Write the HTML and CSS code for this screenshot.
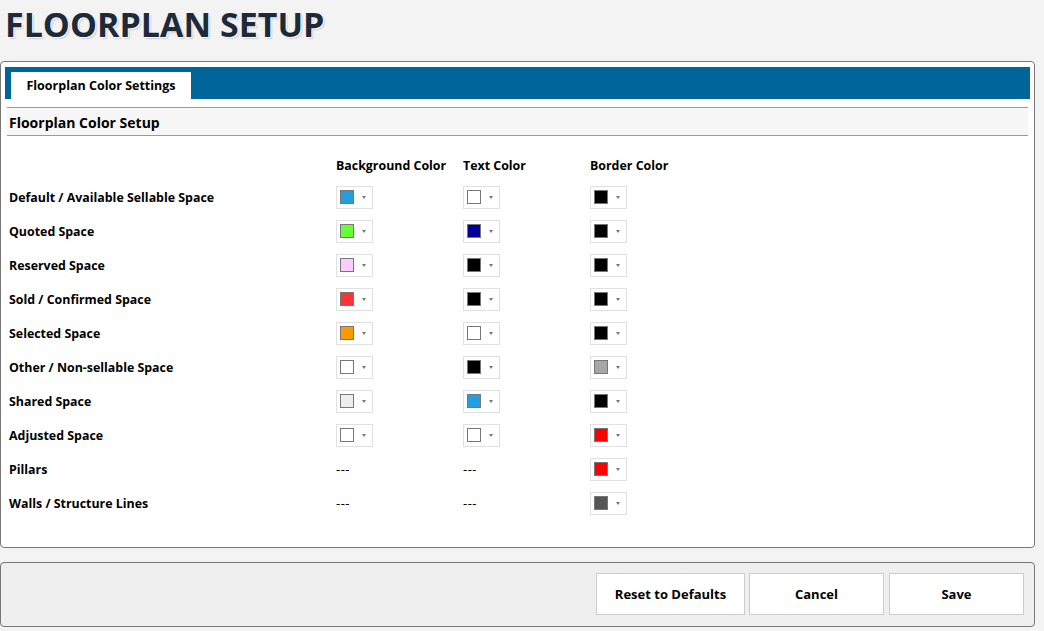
FILE: index.html
```html
<!DOCTYPE html>
<html>
<head>
<meta charset="utf-8">
<link rel="stylesheet" href="styles.css">
</head>
<body>
<h1 class="page-title">FLOORPLAN SETUP</h1>
<div class="panel">
  <div class="tabbar">
    <div class="tab">Floorplan Color Settings</div>
  </div>
  <div class="section-head">Floorplan Color Setup</div>
  <div class="grid">
    <div class="cell"></div>
    <div class="cell colhead">Background Color</div>
    <div class="cell colhead">Text Color</div>
    <div class="cell colhead">Border Color</div>

    <div class="cell label">Default / Available Sellable Space</div>
    <div class="cell"><span class="picker"><span class="sw" style="background:#229fdc"></span><span class="arrow"></span></span></div>
    <div class="cell"><span class="picker"><span class="sw" style="background:#ffffff"></span><span class="arrow"></span></span></div>
    <div class="cell"><span class="picker"><span class="sw" style="background:#000000"></span><span class="arrow"></span></span></div>

    <div class="cell label">Quoted Space</div>
    <div class="cell"><span class="picker"><span class="sw" style="background:#66ff33"></span><span class="arrow"></span></span></div>
    <div class="cell"><span class="picker"><span class="sw" style="background:#000099"></span><span class="arrow"></span></span></div>
    <div class="cell"><span class="picker"><span class="sw" style="background:#000000"></span><span class="arrow"></span></span></div>

    <div class="cell label">Reserved Space</div>
    <div class="cell"><span class="picker"><span class="sw" style="background:#ffccff"></span><span class="arrow"></span></span></div>
    <div class="cell"><span class="picker"><span class="sw" style="background:#000000"></span><span class="arrow"></span></span></div>
    <div class="cell"><span class="picker"><span class="sw" style="background:#000000"></span><span class="arrow"></span></span></div>

    <div class="cell label">Sold / Confirmed Space</div>
    <div class="cell"><span class="picker"><span class="sw" style="background:#ff3333"></span><span class="arrow"></span></span></div>
    <div class="cell"><span class="picker"><span class="sw" style="background:#000000"></span><span class="arrow"></span></span></div>
    <div class="cell"><span class="picker"><span class="sw" style="background:#000000"></span><span class="arrow"></span></span></div>

    <div class="cell label">Selected Space</div>
    <div class="cell"><span class="picker"><span class="sw" style="background:#ff9900"></span><span class="arrow"></span></span></div>
    <div class="cell"><span class="picker"><span class="sw" style="background:#ffffff"></span><span class="arrow"></span></span></div>
    <div class="cell"><span class="picker"><span class="sw" style="background:#000000"></span><span class="arrow"></span></span></div>

    <div class="cell label">Other / Non-sellable Space</div>
    <div class="cell"><span class="picker"><span class="sw" style="background:#ffffff"></span><span class="arrow"></span></span></div>
    <div class="cell"><span class="picker"><span class="sw" style="background:#000000"></span><span class="arrow"></span></span></div>
    <div class="cell"><span class="picker"><span class="sw" style="background:#a6a6a6"></span><span class="arrow"></span></span></div>

    <div class="cell label">Shared Space</div>
    <div class="cell"><span class="picker"><span class="sw" style="background:#eeeeee"></span><span class="arrow"></span></span></div>
    <div class="cell"><span class="picker"><span class="sw" style="background:#229fdc"></span><span class="arrow"></span></span></div>
    <div class="cell"><span class="picker"><span class="sw" style="background:#000000"></span><span class="arrow"></span></span></div>

    <div class="cell label">Adjusted Space</div>
    <div class="cell"><span class="picker"><span class="sw" style="background:#ffffff"></span><span class="arrow"></span></span></div>
    <div class="cell"><span class="picker"><span class="sw" style="background:#ffffff"></span><span class="arrow"></span></span></div>
    <div class="cell"><span class="picker"><span class="sw" style="background:#ff0000"></span><span class="arrow"></span></span></div>

    <div class="cell label">Pillars</div>
    <div class="cell dash">---</div>
    <div class="cell dash">---</div>
    <div class="cell"><span class="picker"><span class="sw" style="background:#ff0000"></span><span class="arrow"></span></span></div>

    <div class="cell label">Walls / Structure Lines</div>
    <div class="cell dash">---</div>
    <div class="cell dash">---</div>
    <div class="cell"><span class="picker"><span class="sw" style="background:#555555"></span><span class="arrow"></span></span></div>
  </div>
</div>
<div class="footer">
  <button class="btn btn-reset">Reset to Defaults</button>
  <button class="btn btn-cancel">Cancel</button>
  <button class="btn btn-save">Save</button>
</div>
</body>
</html>
```

FILE: styles.css
```css
html, body {
  margin: 0;
  padding: 0;
}
body {
  background: #f3f3f3;
  font-family: "Open Sans", "Noto Sans", sans-serif;
  color: #000;
  width: 1044px;
  height: 631px;
  overflow: hidden;
}
.page-title {
  margin: 0;
  padding: 3px 0 0 5px;
  height: 58px;
  box-sizing: border-box;
  font-size: 34px;
  line-height: 42px;
  font-weight: 700;
  color: #1c2b3c;
  text-shadow: 1px 1px 0 #fff, 2px 2px 1px rgba(0,0,0,0.15);
  letter-spacing: 0;
}
.panel {
  margin-top: 3px;
  width: 1035px;
  height: 487px;
  box-sizing: border-box;
  border: 1px solid #777;
  border-radius: 4px;
  background: #fff;
  padding: 5px 4px;
}
.tabbar {
  background: #006699;
  height: 32px;
  box-sizing: border-box;
  padding: 5px 0 0 6px;
  display: flex;
}
.tab {
  background: #fff;
  width: 180px;
  height: 27px;
  display: flex;
  align-items: center;
  justify-content: center;
  font-size: 12.5px;
  font-weight: 700;
}
.section-head {
  margin: 8px 2px 0 2px;
  height: 29px;
  box-sizing: border-box;
  border-top: 1px solid #999;
  border-bottom: 1px solid #999;
  background: #f7f7f7;
  padding: 1px 0 0 2px;
  font-size: 14px;
  font-weight: 700;
  line-height: 27px;
}
.grid {
  display: grid;
  grid-template-columns: 327px 127px 127px 1fr;
  grid-template-rows: 30px;
  grid-auto-rows: 34px;
  margin-top: 14px;
  padding-left: 4px;
}
.cell {
  display: flex;
  align-items: center;
  font-size: 12.4px;
  font-weight: 700;
}
.dash {
  font-weight: 400;
  font-size: 13px;
  letter-spacing: 0.5px;
}
.picker {
  display: inline-flex;
  align-items: center;
  width: 37px;
  height: 23px;
  box-sizing: border-box;
  border: 1px solid #e0e0e0;
  padding-left: 3px;
  background: #fff;
}
.sw {
  width: 14px;
  height: 14px;
  box-sizing: border-box;
  border: 1px solid #777;
}
.arrow {
  margin-left: 8px;
  width: 0;
  height: 0;
  border-left: 2.5px solid transparent;
  border-right: 2.5px solid transparent;
  border-top: 3px solid #777;
}
.footer {
  margin-top: 14px;
  width: 1035px;
  height: 65px;
  box-sizing: border-box;
  border: 1px solid #777;
  border-radius: 4px;
  background: #efefef;
  display: flex;
  justify-content: flex-end;
  gap: 4px;
  padding: 10px 10px 0 0;
}
.btn {
  height: 42px;
  box-sizing: border-box;
  border: 1px solid #ccc;
  background: #fff;
  font-family: "Open Sans", "Noto Sans", sans-serif;
  font-size: 13px;
  font-weight: 700;
  color: #000;
  padding: 0;
}
.btn-reset { width: 149px; }
.btn-cancel { width: 135px; }
.btn-save { width: 135px; margin-left: 1px; }
```
